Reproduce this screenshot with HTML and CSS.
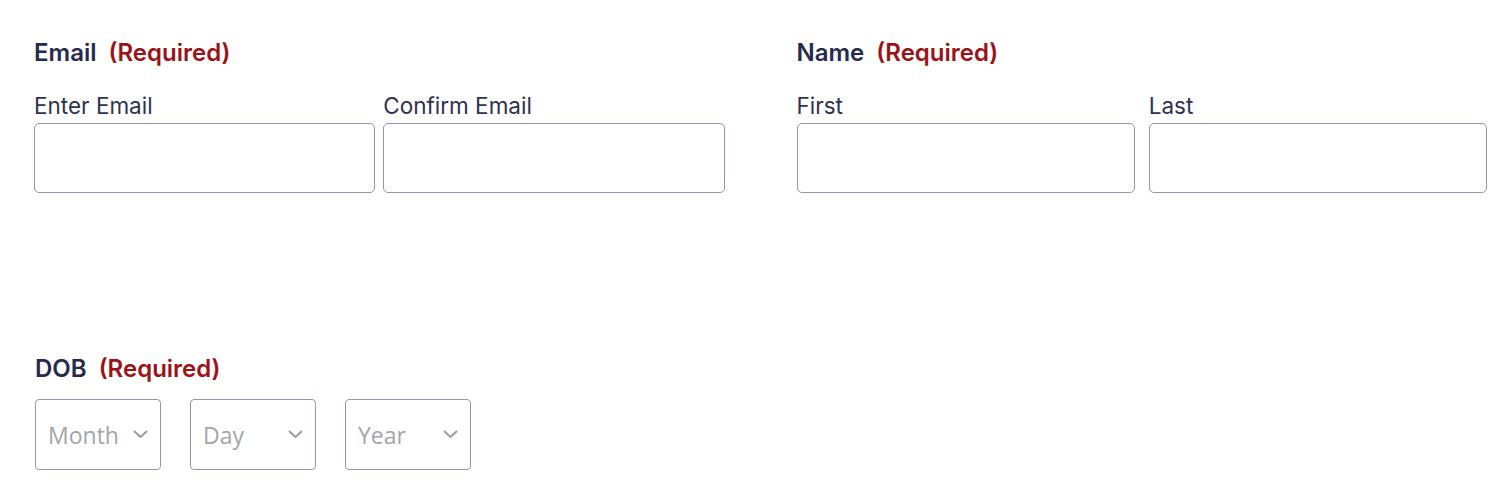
FILE: index.html
```html
<!DOCTYPE html>
<html lang="en">
<head>
    <meta charset="UTF-8">
    <title>Form</title>
    <link rel="stylesheet" href="styles.css">
</head>
<body>
<form class="form">
    <div class="row">
        <fieldset class="field">
            <legend class="fieldLabel">Email <span class="required">(Required)</span></legend>
            <div class="pair pairEmail">
                <div class="sub">
                    <label for="email">Enter Email</label>
                    <input id="email" type="email">
                </div>
                <div class="sub">
                    <label for="email2">Confirm Email</label>
                    <input id="email2" type="email">
                </div>
            </div>
        </fieldset>
        <fieldset class="field">
            <legend class="fieldLabel">Name <span class="required">(Required)</span></legend>
            <div class="pair pairName">
                <div class="sub">
                    <label for="first">First</label>
                    <input id="first" type="text">
                </div>
                <div class="sub">
                    <label for="last">Last</label>
                    <input id="last" type="text">
                </div>
            </div>
        </fieldset>
    </div>

    <fieldset class="field dob">
        <legend class="fieldLabel">DOB <span class="required">(Required)</span></legend>
        <div class="selects">
            <div class="selectBox">
                <select><option>Month</option></select>
                <svg viewBox="0 0 15 8" width="15" height="8"><path d="M1 1l6.5 6L14 1" fill="none" stroke="#9a9ca4" stroke-width="2"/></svg>
            </div>
            <div class="selectBox">
                <select><option>Day</option></select>
                <svg viewBox="0 0 15 8" width="15" height="8"><path d="M1 1l6.5 6L14 1" fill="none" stroke="#9a9ca4" stroke-width="2"/></svg>
            </div>
            <div class="selectBox">
                <select><option>Year</option></select>
                <svg viewBox="0 0 15 8" width="15" height="8"><path d="M1 1l6.5 6L14 1" fill="none" stroke="#9a9ca4" stroke-width="2"/></svg>
            </div>
        </div>
    </fieldset>
</form>
</body>
</html>
```

FILE: styles.css
```css
body {
    margin: 0;
    background: #fff;
    font-family: Inter, "Noto Sans", sans-serif;
    color: #272a4a;
}

.form {
    padding: 39px 18px 0 34px;
}

.row {
    display: flex;
    gap: 72px;
}

.row .field {
    flex: 1;
}

fieldset {
    border: 0;
    margin: 0;
    padding: 0;
    min-width: 0;
}

.fieldLabel {
    padding: 0;
    font-size: 24px;
    font-weight: 600;
    line-height: 28px;
    color: #262a4c;
}

.required {
    margin-left: 6px;
    color: #9b1217;
}

.pair {
    display: flex;
    margin-top: 25px;
}

.pairEmail {
    gap: 8px;
}

.pairName {
    gap: 14px;
}

.sub {
    flex: 1;
    display: flex;
    flex-direction: column;
}

.sub label {
    font-size: 22.5px;
    line-height: 27px;
    margin-bottom: 4px;
    color: #2f3250;
}

.sub input {
    height: 70px;
    box-sizing: border-box;
    border: 1px solid #9294b8;
    border-radius: 5px;
    background: #fff;
    font-size: 18px;
    padding: 0 12px;
}

.dob {
    margin-top: 162px;
    padding-left: 1px;
}

.selects {
    display: flex;
    gap: 29px;
    margin-top: 16px;
}

.selectBox {
    position: relative;
    width: 126px;
    height: 71px;
}

.selectBox select {
    appearance: none;
    width: 100%;
    height: 100%;
    border: 1px solid #9294b8;
    border-radius: 4px;
    background: #fff;
    padding: 0 12px;
    font-family: "Open Sans", sans-serif;
    font-size: 23px;
    color: #a3a5ab;
}

.selectBox svg {
    position: absolute;
    right: 13px;
    top: 31px;
    pointer-events: none;
}
```
